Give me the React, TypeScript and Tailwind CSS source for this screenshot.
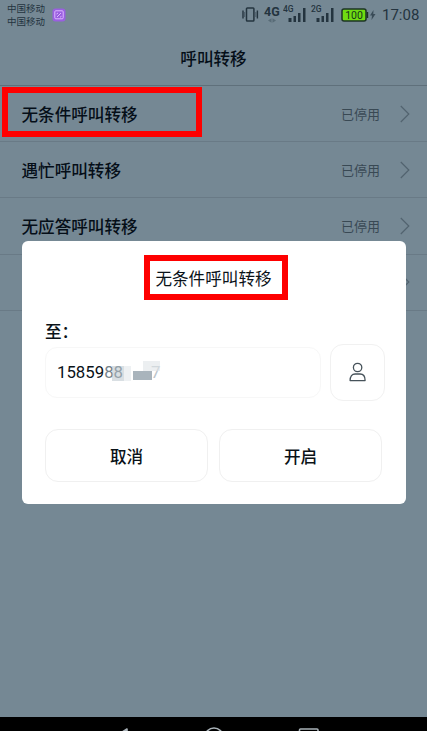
import type { ReactNode } from 'react'

interface ForwardItem {
  label: string
  status?: string
  marked?: boolean
}

const items: ForwardItem[] = [
  { label: '无条件呼叫转移', status: '已停用', marked: true },
  { label: '遇忙呼叫转移', status: '已停用' },
  { label: '无应答呼叫转移', status: '已停用' },
  { label: '' },
]

function Signal({ label }: { label: string }) {
  return (
    <svg width="25" height="20" viewBox="0 0 25 20" fill="#24343f">
      <text x="0" y="8.5" fontSize="8.5" fontWeight="500" fontFamily="Roboto, sans-serif">
        {label}
      </text>
      <rect x="5.5" y="15" width="3" height="4" />
      <rect x="10.5" y="13" width="2.5" height="6" />
      <rect x="15" y="10" width="2.5" height="9" />
      <rect x="20" y="5" width="2.5" height="14" />
    </svg>
  )
}

function StatusBar() {
  return (
    <div className="flex h-[30px] shrink-0 text-[#24343f]">
      <div className="w-[44px] pl-[7px] pt-[2px] text-[9.5px] leading-[13px] whitespace-nowrap">
        <div>中国移动</div>
        <div>中国移动</div>
      </div>
      <svg className="ml-[8px] mt-[8px]" width="14" height="14" viewBox="0 0 14 14" fill="none">
        <rect x=".5" y=".5" width="13" height="13" rx="3" fill="#9a5fe0" />
        <rect x="2.8" y="2.8" width="8.4" height="8" rx="1" stroke="#ddb8ff" />
        <path d="M4.5 6l1.5-1M5 9l2-2 2-2M8 9.3l1.5-1" stroke="#ddb8ff" />
      </svg>

      <svg className="ml-[176px] mt-[7px]" width="17" height="16" viewBox="0 0 17 16" fill="none" stroke="#24343f" strokeWidth="1.5">
        <rect x="4.5" y="1" width="7.4" height="13" rx="0.8" />
        <path d="M1 3.5v8M15.4 3.5v8" strokeWidth="1.4" />
        <path d="M2.6 5v5M13.8 5v5" strokeWidth=".5" />
      </svg>
      <div className="ml-[5px] mt-[5px] w-[16px] font-[Roboto,sans-serif]">
        <div className="text-[12.5px] leading-[13px] font-bold">4G</div>
        <svg className="ml-[4px]" width="8" height="5" viewBox="0 0 8 5" fill="#586b77">
          <path d="M0 2.5L3.5 .3v4.4zM8 2.5L4.5 .3v4.4z" />
        </svg>
      </div>
      <div className="ml-[3px] mt-[3px] flex gap-[3px]">
        <Signal label="4G" />
        <Signal label="2G" />
      </div>
      <svg className="ml-[5px] mt-[8px]" width="36" height="14" viewBox="0 0 36 14">
        <rect x="1" y="1" width="24" height="12" rx="2" fill="#6fdc12" stroke="#1d3325" strokeWidth="1.5" />
        <path d="M26.4 4v6" stroke="#1d3325" strokeWidth="1.6" />
        <text x="13" y="10.8" textAnchor="middle" fontSize="10.5" fontFamily="Roboto, sans-serif" fill="#14351b">
          100
        </text>
        <path d="M32.5 2L29 7.5h2L30.5 12l4-6h-2.2z" fill="#3a4c58" />
      </svg>
      <span className="ml-[5px] mt-[5px] font-[Roboto,sans-serif] text-[15px] leading-[20px]">17:08</span>
    </div>
  )
}

function ForwardRow({ label, status, marked }: ForwardItem) {
  return (
    <li className="relative flex h-[56.2px] items-center border-b border-[#697a86] pr-[17px] pl-[21.5px]">
      <span className="flex-1 pt-[1px] text-[16.6px] font-medium text-[#050e18]">{label}</span>
      <span className="text-[13px] text-[#394954]">{status}</span>
      <svg className="ml-[20px]" width="10" height="18" viewBox="0 0 10 18" fill="none" stroke="#52636f" strokeWidth="1.2">
        <path d="M.8 1l8 8-8 8" />
      </svg>
      {marked && <div className="absolute top-[1px] left-[2px] h-[50px] w-[200px] border-[6px] border-[#fe0000]" />}
    </li>
  )
}

function DialogButton({ children }: { children: ReactNode }) {
  return (
    <button className="h-[53px] w-[163px] rounded-[13px] border border-[#f0f0f0] pt-[2px] text-[16.6px] font-medium">
      {children}
    </button>
  )
}

function ForwardDialog() {
  return (
    <div className="absolute top-[241px] left-[21.5px] flex h-[263px] w-[384.5px] flex-col rounded-[6px] bg-white pt-[14px] pr-[21px] pl-[23.5px] text-[#0a1218]">
      <h2 className="ml-[99px] flex h-[45px] w-[144px] items-center justify-center border-[6px] border-[#fe0000] pt-[1px] pr-[5px] text-[16.6px] whitespace-nowrap">
        无条件呼叫转移
      </h2>
      <label className="mt-[19px] h-[24px] text-[16.6px] leading-[24px] font-medium">至：</label>
      <div className="flex h-[58px] items-center justify-between">
        <div className="relative flex h-[51px] w-[276px] items-center rounded-[12px] border border-[#f7f7f7] pt-[2px] pl-[11px] font-[Roboto,sans-serif] text-[16.8px]">
          <span>15859</span>
          <span className="text-[#75838b]">88</span>
          <span className="ml-[28px] text-[#bcc5cb]">7</span>
          {/* blurred-out digits */}
          <div className="absolute top-[18px] left-[66px] h-[15px] w-[12px] bg-[#b4c0c8]/50" />
          <div className="absolute top-[18px] left-[78px] h-[15px] w-[7px] bg-[#eef1f3]" />
          <div className="absolute top-[13px] left-[97px] h-[10px] w-[17px] bg-[#dfe4e8]/60" />
          <div className="absolute top-[23px] left-[87px] h-[9px] w-[19px] bg-[#a9b4bc]" />
        </div>
        <button className="flex h-[57px] w-[55px] items-center justify-center rounded-[13px] border border-[#f1f1f1]">
          <svg width="18" height="20" viewBox="0 0 18 20" fill="none" stroke="#46525a" strokeWidth="1.3">
            <circle cx="8.6" cy="5.5" r="4.2" />
            <path d="M1.1 18.6c0-4.3 2-6.6 5-6.6h5c3 0 5 2.3 5 6.6z" strokeLinejoin="round" />
          </svg>
        </button>
      </div>
      <div className="mt-[28px] flex gap-[11px]">
        <DialogButton>取消</DialogButton>
        <DialogButton>开启</DialogButton>
      </div>
    </div>
  )
}

export default function App() {
  return (
    <div className="relative flex h-[731px] w-[427px] flex-col overflow-hidden bg-[#758894] font-['Noto_Sans_CJK_SC',sans-serif]">
      <StatusBar />
      <header className="flex h-[56px] items-center justify-center border-b border-[#5f707b] pt-[1px] text-[16.6px] font-medium text-[#050e18]">
        呼叫转移
      </header>
      <ul className="flex-1">
        {items.map((item, i) => (
          <ForwardRow key={i} {...item} />
        ))}
      </ul>
      <nav className="flex h-[14px] shrink-0 items-start overflow-hidden bg-black">
        <svg width="427" height="30" viewBox="0 0 427 30" fill="none" stroke="#a9b2b8" strokeWidth="1.6">
          <path d="M127 12L111 22l16 10z" strokeLinejoin="round" />
          <circle cx="214" cy="20" r="9" />
          <rect x="299.5" y="12" width="18.5" height="17" rx="1" />
        </svg>
      </nav>
      <ForwardDialog />
    </div>
  )
}
